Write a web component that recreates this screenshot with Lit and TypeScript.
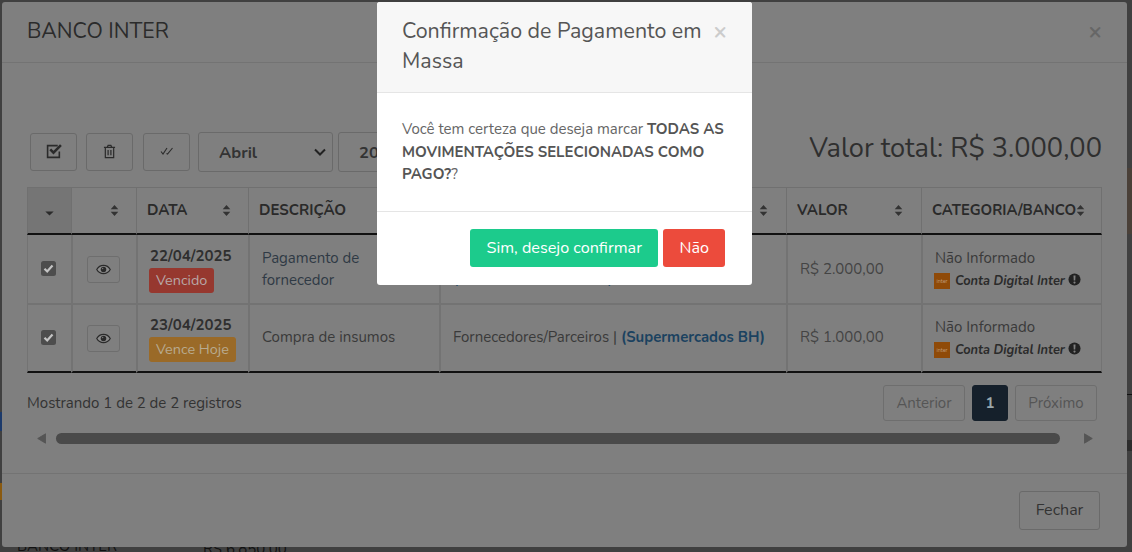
import { LitElement, html, css } from "lit";
import { customElement } from "lit/decorators.js";

const sortIcon = html`<svg class="sort" viewBox="0 0 10 14" width="9" height="13"><path d="M5 1 9.200 5.600H.8zM5 13 .8 8.400h8.400z" fill="#333"/></svg>`;
const eye = html`<svg viewBox="0 0 20 14" width="15" height="11"><path d="M10 1.500C5.800 1.500 2.600 4.200 1 7c1.600 2.800 4.800 5.500 9 5.500s7.400-2.700 9-5.500c-1.600-2.800-4.800-5.500-9-5.500z" fill="#8c8c8c" stroke="#2a2a2a" stroke-width="1.600"/><circle cx="10" cy="7" r="3.700" fill="#2a2a2a"/><circle cx="8.800" cy="5.800" r="1" fill="#777"/></svg>`;
const bank = html`<span class="logo">inter</span>`;
const warn = html`<svg viewBox="0 0 14 14" width="13" height="13"><circle cx="7" cy="7" r="6.500" fill="#222"/><path d="M5.900 2.800h2.200L7.800 8.200H6.200z" fill="#7f7f7f"/><circle cx="7" cy="10.300" r="1.200" fill="#7f7f7f"/></svg>`;
const check = html`<svg class="cb" viewBox="0 0 15 15" width="15" height="15"><rect width="15" height="15" rx="2.500" fill="#4d4d4d"/><path d="M3.500 7.800 6.200 10.500 11.500 4.500" fill="none" stroke="#c4c4c4" stroke-width="2.200"/></svg>`;

@customElement("app-root")
export class AppRoot extends LitElement {
  static styles = css`
    :host { display: block; width: 1132px; height: 552px; font-family: "Nunito", "Lato", "Noto Sans", sans-serif; color: #2d2d2d; }
    * { box-sizing: border-box; }
    .screen { position: relative; width: 1132px; height: 552px; overflow: hidden; background: #404040; }
    .peek { position: absolute; left: 17px; top: 536px; width: 400px; display: flex; font-size: 15px; color: #111; font-weight: 400; }
    .peek b { font-weight: 400; width: 186px; }
    .peek span { margin-top: 3px; }
    .peek-a { position: absolute; left: 0; top: 412px; width: 2px; height: 19px; background: #1c3a6b; }
    .peek-b { position: absolute; left: 0; top: 483px; width: 2px; height: 17px; background: #8a5a10; }
    .peek-c { position: absolute; left: 1127px; top: 168px; width: 5px; height: 66px; background: #4a4038; }
    .peek-d { position: absolute; left: 1127px; top: 440px; width: 5px; height: 11px; background: #2c2c2c; }
    .peek-e { position: absolute; left: 1127px; top: 394px; width: 5px; height: 1px; background: #111; }
    .modal { position: absolute; left: 2px; top: 2px; width: 1125px; height: 545px; background: #7f7f7f; border-radius: 3px; display: flex; flex-direction: column; }
    .head { height: 61px; border-bottom: 1px solid #737373; display: flex; align-items: center; justify-content: space-between; padding: 0 25px 2px; font-size: 21.300px; color: #2b2b2b; }
    .x { color: #666; font-size: 23px; font-weight: 700; line-height: 1; }
    .main { flex: 1; padding: 69px 25px 0; position: relative; }
    .toolbar { display: flex; align-items: center; height: 40px; }
    .tb { width: 47px; height: 38px; border: 1px solid #6a6a6a; border-radius: 3px; display: flex; align-items: center; justify-content: center; margin-right: 9px; }
    .tb:first-child { margin-left: 3px; }
    .tb:nth-child(2) { margin-right: 10px; }
    .tb:nth-child(3) { margin-right: 8px; }
    .tb svg { margin-top: -2px; }
    .sel { height: 40px; border: 1px solid #6a6a6a; border-radius: 3px; font-size: 16.500px; font-weight: 700; color: #333; display: flex; align-items: center; justify-content: space-between; padding: 0 6px 0 20px; }
    .sel.m { width: 135px; margin-right: 5px; }
    .sel.y { width: 100px; padding-left: 20px; }
    .total { margin-left: auto; font-size: 27.200px; color: #2f2f2f; white-space: nowrap; margin-bottom: 7px; }
    table { border-collapse: separate; border-spacing: 0; width: 1075px; margin-top: 15px; table-layout: fixed; font-size: 15px; color: #3a3a3a; }
    th { height: 48px; border: 1px solid #707070; border-right-width: 0; border-bottom: 2px solid #111; padding: 0 17px 0 10px; text-align: left; font-weight: 700; font-size: 15px; color: #2a2a2a; white-space: nowrap; }
    th.s1 { padding-right: 18px; }
    th:last-child, td:last-child { border-right-width: 1px; }
    th .r { display: flex; justify-content: space-between; align-items: center; }
    th .r span { margin-bottom: 2px; }
    th.first { background: #757575; text-align: center; padding: 0; }
    th.end { padding-right: 0; }
    th.end .r { justify-content: flex-start; font-size: 14.800px; }
    td { border: 2px solid #737373; border-width: 0 0 2px 2px; padding: 0 12px 2px 12px; height: 70px; line-height: 22px; }
    tr:last-child td { border-bottom: 2px solid #111; height: 68px; }
    td:last-child { border-right: 1px solid #737373; }
    td:first-child { border-left-width: 1px; }
    .c { text-align: center; padding: 0; }
    .cb { display: inline-block; vertical-align: middle; margin: 0 3px 3px 0; }
    .eye { display: inline-flex; align-items: center; justify-content: center; width: 33px; height: 27px; margin-right: 2px; border: 1px solid #6e6e6e; border-radius: 3px; vertical-align: middle; }
    .dc { padding: 0 0 0 11px; }
    .dc.r1 { padding-top: 1px; }
    .date { font-weight: 700; line-height: 20px; margin: 0 0 2px 1px; color: #2f2f2f; }
    .badge { display: block; width: fit-content; height: 25px; line-height: 25px; padding: 0 7px; border-radius: 3px; font-size: 14.400px; white-space: nowrap; }
    .bad { background: #96382f; color: #b8a8a8; }
    .warnb { background: #9a6a28; color: #b8aa90; }
    .link { color: #1b4260; font-weight: 700; font-size: 14.900px; }
    .desc1 { color: #2f3a45; padding-bottom: 0; }
    .val { color: #444; }
    .val.r1 { padding-bottom: 0; }
    .two { padding-bottom: 5px; }
    .cat { padding-bottom: 0; }
    .bk { display: flex; align-items: center; gap: 5px; font-size: 12.800px; font-weight: 700; font-style: italic; color: #2b2b2b; margin: 1px 0 0 -1px; }
    .bk svg { margin-left: -2px; margin-top: -2px; }
    .logo { width: 16px; height: 16px; background: #8f4a08; color: #bf9a78; font-size: 5.500px; font-style: normal; font-weight: 400; display: flex; align-items: center; justify-content: center; }
    .foot-row { display: flex; justify-content: space-between; align-items: center; margin-top: 12px; height: 36px; font-size: 15px; color: #333; }
    .pager { display: flex; gap: 7px; margin-right: 5px; }
    .pg { height: 36px; width: 82px; text-align: center; border: 1px solid #6e6e6e; border-radius: 3px; color: #555; line-height: 34px; }
    .pg.on { background: #15202b; border-color: #15202b; color: #9aa7ac; font-weight: 700; width: 36px; }
    .scroll { display: flex; align-items: center; height: 12px; margin-top: 11px; padding: 0 9px 0 10px; }
    .bar { flex: 1; height: 11px; background: #4a4a4a; border-radius: 6px; margin: 0 24px 0 10px; }
    .foot { height: 74px; border-top: 1px solid #737373; display: flex; justify-content: flex-end; align-items: center; padding: 0 27px 0 0; }
    .btn { width: 81px; height: 39px; padding-bottom: 2px; border: 1px solid #6a6a6a; border-radius: 3px; display: flex; align-items: center; justify-content: center; font-size: 16px; color: #333; }

    .dialog { position: absolute; left: 377px; top: 2px; width: 375px; height: 283px; background: #fff; border-radius: 3px; display: flex; flex-direction: column; color: #555; }
    .d-head { height: 91px; background: #f7f7f7; border-bottom: 1px solid #e5e5e5; padding: 14px 25px 0; display: flex; font-size: 21.400px; line-height: 30px; color: #555; border-radius: 3px 3px 0 0; }
    .d-head span { flex: 1; }
    .d-x { color: #ccc; font-size: 23px; font-weight: 700; line-height: 32px; flex: none !important; margin-left: 11px; }
    .d-body { height: 119px; padding: 25px 25px 0; font-size: 15px; line-height: 22.500px; color: #666; border-bottom: 1px solid #e5e5e5; }
    .d-body b { color: #555; font-weight: 700; font-size: 15px; }
    .d-foot { display: flex; justify-content: flex-end; gap: 5px; padding: 17px 27px 0 0; }
    .g { height: 38px; padding: 0 16.500px; border-radius: 3px; color: #fff; font-size: 16.200px; display: flex; align-items: center; }
    .g.y { background: #1ccb8c; }
    .g.n { background: #ec4b3c; padding: 0 16px; }
  `;

  render() {
    return html`<div class="screen">
      <div class="peek"><b>BANCO INTER</b><span>R$ 6.850,00</span></div>
      <i class="peek-a"></i><i class="peek-b"></i><i class="peek-c"></i><i class="peek-d"></i><i class="peek-e"></i>
      <div class="modal">
        <div class="head"><span>BANCO INTER</span><span class="x">×</span></div>
        <div class="main">
          <div class="toolbar">
            <div class="tb"><svg viewBox="0 0 16 15" width="18" height="16"><path d="M11.500 2.500H2v11h11V8" fill="none" stroke="#2b2b2b" stroke-width="1.500"/><path d="M4.500 6 7.500 9 14.500 2" fill="none" stroke="#2b2b2b" stroke-width="2.400"/></svg></div>
            <div class="tb"><svg viewBox="0 0 14 16" width="13" height="15"><path d="M1 3.500h12M4.500 3.500l1-2h3l1 2M2.500 3.500v11h9v-11M5.500 6.500v5.500M8.500 6.500v5.500" fill="none" stroke="#2b2b2b" stroke-width="1.300"/></svg></div>
            <div class="tb"><svg viewBox="0 0 14 8" width="14" height="8"><path d="M1 4.500 3 7 7 1M6.500 6.500 7.500 7 12.500 1" fill="none" stroke="#2b2b2b" stroke-width="1.100"/></svg></div>
            <div class="sel m">Abril<svg viewBox="0 0 12 8" width="12" height="8"><path d="M1 1.500 6 6.500 11 1.500" fill="none" stroke="#222" stroke-width="2"/></svg></div>
            <div class="sel y">2025</div>
            <div class="total">Valor total: R$ 3.000,00</div>
          </div>
          <table>
            <colgroup><col style="width:44px"><col style="width:65px"><col style="width:112px"><col style="width:191px"><col style="width:347px"><col style="width:135px"><col style="width:181px"></colgroup>
            <thead><tr>
              <th class="first"><svg viewBox="0 0 10 6" width="9" height="5"><path d="M0 .5h10L5 5.500z" fill="#2b2b2b"/></svg></th>
              <th><div class="r" style="justify-content:flex-end">${sortIcon}</div></th>
              <th><div class="r"><span>DATA</span> ${sortIcon}</div></th>
              <th><div class="r"><span>DESCRIÇÃO</span> ${sortIcon}</div></th>
              <th class="s1"><div class="r"><span>FORNECEDOR</span> ${sortIcon}</div></th>
              <th class="s1"><div class="r"><span>VALOR</span> ${sortIcon}</div></th>
              <th class="end"><div class="r"><span>CATEGORIA/BANCO</span>${sortIcon}</div></th>
            </tr></thead>
            <tbody>
              <tr>
                <td class="c">${check}</td><td class="c"><span class="eye">${eye}</span></td>
                <td class="dc r1"><div class="date">22/04/2025</div><span class="badge bad">Vencido</span></td>
                <td class="desc1">Pagamento de fornecedor</td>
                <td class="two">Fornecedores/Parceiros |<br><span class="link">(Fornecedor do Centro)</span></td>
                <td class="val r1">R$ 2.000,00</td>
                <td class="cat">Não Informado<div class="bk">${bank}Conta Digital Inter ${warn}</div></td>
              </tr>
              <tr>
                <td class="c">${check}</td><td class="c"><span class="eye">${eye}</span></td>
                <td class="dc"><div class="date">23/04/2025</div><span class="badge warnb">Vence Hoje</span></td>
                <td>Compra de insumos</td>
                <td>Fornecedores/Parceiros | <span class="link">(Supermercados BH)</span></td>
                <td class="val">R$ 1.000,00</td>
                <td class="cat">Não Informado<div class="bk">${bank}Conta Digital Inter ${warn}</div></td>
              </tr>
            </tbody>
          </table>
          <div class="foot-row"><span>Mostrando 1 de 2 de 2 registros</span>
            <div class="pager"><span class="pg">Anterior</span><span class="pg on">1</span><span class="pg">Próximo</span></div></div>
          <div class="scroll"><svg viewBox="0 0 10 12" width="9" height="11"><path d="M9.500 .8v10.400L.8 6z" fill="#555" stroke="#555" stroke-linejoin="round"/></svg><div class="bar"></div><svg viewBox="0 0 10 12" width="9" height="11"><path d="M.5 .8v10.400L9.200 6z" fill="#555" stroke="#555" stroke-linejoin="round"/></svg></div>
        </div>
        <div class="foot"><div class="btn">Fechar</div></div>
      </div>
      <div class="dialog">
        <div class="d-head"><span>Confirmação de Pagamento em Massa</span><span class="d-x">×</span></div>
        <div class="d-body">Você tem certeza que deseja marcar <b>TODAS AS MOVIMENTAÇÕES SELECIONADAS COMO PAGO?</b>?</div>
        <div class="d-foot"><div class="g y">Sim, desejo confirmar</div><div class="g n">Não</div></div>
      </div>
    </div>`;
  }
}
